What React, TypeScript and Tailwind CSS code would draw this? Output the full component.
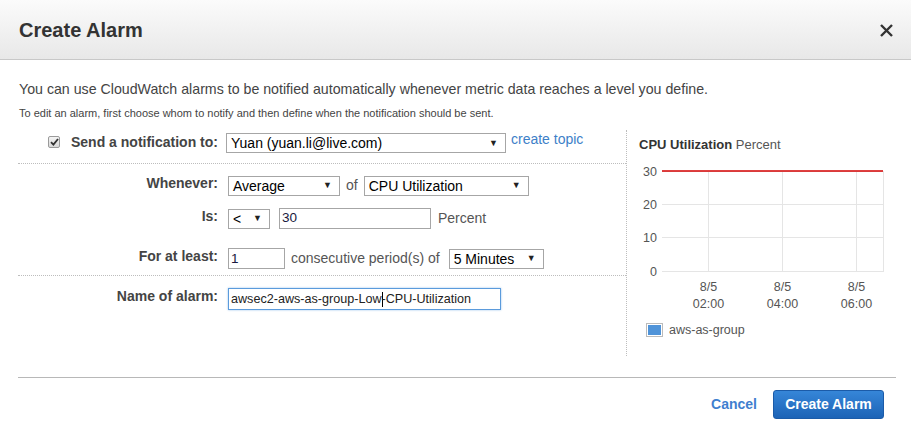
import React from 'react'

const font = { fontFamily: '"Liberation Sans", Arial, sans-serif' }

function Select({ value, className }: { value: string; className: string }) {
  return (
    <div
      className={`flex h-[20px] items-center justify-between border border-[#a6a6a6] bg-white pl-[4px] pr-[7px] text-[14px] leading-none text-black ${className}`}
    >
      <span>{value}</span>
      <span className="text-[9px] text-[#222]">▼</span>
    </div>
  )
}

function Input({ value, className }: { value: string; className: string }) {
  return (
    <div
      className={`flex h-[21px] items-center border border-[#a6a6a6] bg-white px-[2px] text-[13.5px] leading-none text-[#1a1a40] ${className}`}
    >
      {value}
    </div>
  )
}

function Label({ children }: { children: React.ReactNode }) {
  return (
    <div className="flex justify-end text-[14px] font-bold leading-[16px] text-[#444]">{children}</div>
  )
}

function Chart() {
  const grid = '#e5e5e5'
  const ys = [
    { v: '30', y: 11 },
    { v: '20', y: 44 },
    { v: '10', y: 77 },
    { v: '0', y: 111 },
  ]
  const xs = [81, 155, 229]
  return (
    <svg width="269" height="155" viewBox="0 0 269 155" className="block">
      {ys.map((t) => (
        <line key={t.v} x1="35" x2="256" y1={t.y + 0.5} y2={t.y + 0.5} stroke={grid} strokeWidth="1" />
      ))}
      {xs.map((x) => (
        <line key={x} x1={x + 0.5} x2={x + 0.5} y1="11" y2="112" stroke={grid} strokeWidth="1" />
      ))}
      <line x1="256.5" x2="256.5" y1="11" y2="112" stroke={grid} strokeWidth="1" />
      <line x1="35" x2="256" y1="11" y2="11" stroke="#d40000" strokeWidth="1.5" />
      {ys.map((t) => (
        <text
          key={t.v}
          x="30"
          y={t.y + 4.5}
          textAnchor="end"
          fontSize="12.5"
          fill="#555"
          fontFamily='"Liberation Sans", Arial, sans-serif'
        >
          {t.v}
        </text>
      ))}
      {['02:00', '04:00', '06:00'].map((t, i) => (
        <g key={t} fontSize="12.5" fill="#555" fontFamily='"Liberation Sans", Arial, sans-serif' textAnchor="middle">
          <text x={xs[i] + 0.5} y="131">8/5</text>
          <text x={xs[i] + 0.5} y="148">{t}</text>
        </g>
      ))}
    </svg>
  )
}

export default function App() {
  return (
    <div className="h-[431px] w-[911px] overflow-hidden bg-white" style={font}>
      {/* header */}
      <div className="flex h-[60px] items-center justify-between border-b border-[#c8c8c8] bg-gradient-to-b from-[#fbfbfb] to-[#e8e8e8] pl-[19px] pr-[18px]">
        <h1 className="text-[20px] font-bold text-[#333]">Create Alarm</h1>
        <svg width="13" height="13" viewBox="0 0 13 13" className="mt-[1px]">
          <path d="M1 1 L12 12 M12 1 L1 12" stroke="#333" strokeWidth="2.4" />
        </svg>
      </div>

      {/* intro */}
      <div className="px-[19px] pt-[21px] text-[#444]">
        <p className="text-[14.2px] leading-[16px]">
          You can use CloudWatch alarms to be notified automatically whenever metric data reaches a level you define.
        </p>
        <p className="mt-[10px] text-[11px] leading-[12px]">
          To edit an alarm, first choose whom to notify and then define when the notification should be sent.
        </p>
      </div>

      {/* body */}
      <div className="ml-[18px] mr-[15px] mt-[11px] flex h-[226px]">
        <div className="w-[608px] shrink-0">
          <div className="flex h-[34px] items-start border-b border-dotted border-[#bdbdbd] pt-[3px]">
            <div className="flex w-[200px] items-center justify-end gap-[11px] pt-[1px]">
              <div className="flex h-[12px] w-[12px] items-center justify-center rounded-[2px] border border-[#9a9a9a] bg-gradient-to-b from-[#f4f4f4] to-[#d9d9d9]">
                <svg width="9" height="8" viewBox="0 0 9 8">
                  <path d="M1 4.2 L3.4 6.6 L8 1" fill="none" stroke="#333" strokeWidth="1.8" />
                </svg>
              </div>
              <span className="text-[14px] font-bold leading-[16px] text-[#444]">Send a notification to:</span>
            </div>
            <Select value="Yuan (yuan.li@live.com)" className="ml-[8px] w-[280px]" />
            <a className="ml-[5px] -mt-[2px] text-[14px] leading-[16px] text-[#3d80c8]">create topic</a>
          </div>

          <div className="border-b border-dotted border-[#bdbdbd] pb-[6px] pt-[11px]">
            <div className="grid grid-cols-[200px_1fr] gap-x-[10px]">
              <Label>Whenever:</Label>
              <div className="flex items-center">
                <Select value="Average" className="w-[112px]" />
                <span className="ml-[6px] mr-[6px] text-[14px] text-[#555]">of</span>
                <Select value="CPU Utilization" className="w-[165px]" />
              </div>
            </div>
            <div className="mt-[12px] grid grid-cols-[200px_1fr] gap-x-[10px]">
              <Label>Is:</Label>
              <div className="flex items-center">
                <Select value="<" className="w-[42px]" />
                <Input value="30" className="ml-[9px] -mt-[1px] w-[152px]" />
                <span className="ml-[7px] text-[14px] text-[#555]">Percent</span>
              </div>
            </div>
            <div className="mt-[19px] grid grid-cols-[200px_1fr] gap-x-[10px]">
              <Label>For at least:</Label>
              <div className="flex items-center">
                <Input value="1" className="w-[57px]" />
                <span className="ml-[6px] mr-[9px] text-[14px] text-[#555]">consecutive period(s) of</span>
                <Select value="5 Minutes" className="w-[95px]" />
              </div>
            </div>
          </div>

          <div className="grid grid-cols-[200px_1fr] gap-x-[10px] pt-[12px]">
            <Label>Name of alarm:</Label>
            <div className="flex h-[22px] w-[273px] items-center border border-[#5b9bdc] bg-white px-[2px] text-[12.6px] leading-none text-[#222] shadow-[0_0_2px_#9cc4ec]">
              <span>awsec2-aws-as-group-Low</span>
              <span className="h-[15px] w-px bg-black" />
              <span className="-ml-px">-CPU-Utilization</span>
            </div>
          </div>
        </div>

        <div className="h-[226px] flex-1 border-l border-dotted border-[#bdbdbd]">
          <div className="pl-[12px] pt-[7px] text-[13px] leading-[16px] text-[#333]">
            <span className="font-bold">CPU Utilization</span> <span className="text-[#555]">Percent</span>
          </div>
          <div className="mt-[7px]">
            <Chart />
          </div>
          <div className="ml-[19px] mt-[6px] flex items-center gap-[6px]">
            <div className="h-[14px] w-[17px] border border-[#bbb] p-px">
              <div className="h-full w-full bg-[#4f93d8]" />
            </div>
            <span className="text-[12.5px] text-[#555]">aws-as-group</span>
          </div>
        </div>
      </div>

      {/* footer */}
      <div className="ml-[18px] mr-[15px] mt-[21px] border-t border-[#b8b8b8]">
        <div className="flex items-center justify-end gap-[16px] pr-[12px] pt-[12px]">
          <a className="text-[14px] font-bold text-[#3f7fcf]">Cancel</a>
          <button className="h-[29px] w-[111px] rounded-[3px] border border-[#1b5ba8] bg-gradient-to-b from-[#3686d8] to-[#1c63b6] text-[14px] font-bold text-white">
            Create Alarm
          </button>
        </div>
      </div>
    </div>
  )
}
